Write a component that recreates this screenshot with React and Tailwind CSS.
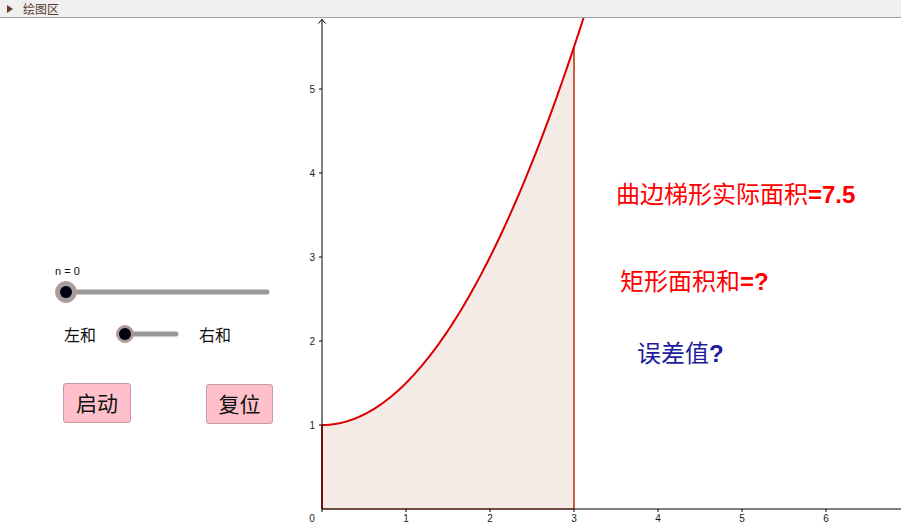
import React from "react";

const OX = 322;
const OY = 509;
const U = 84;
const f = (x) => 1 + (x * x) / 2;
const px = (x) => OX + x * U;
const py = (y) => OY - y * U;

function curvePoints(a, b, n) {
  const pts = [];
  for (let i = 0; i <= n; i++) {
    const x = a + ((b - a) * i) / n;
    pts.push(`${px(x).toFixed(2)},${py(f(x)).toFixed(2)}`);
  }
  return pts;
}

function Graph() {
  const fillPts = [`${OX},${OY}`, ...curvePoints(0, 3, 80), `${px(3)},${OY}`].join(" ");
  const curve = curvePoints(0, 3.13, 100).join(" ");
  const xt = [1, 2, 3, 4, 5, 6];
  const yt = [1, 2, 3, 4, 5];
  const ff = "'Liberation Sans', Arial, sans-serif";
  return (
    <svg className="absolute left-0 top-0" width="901" height="512" viewBox="0 18 901 512">
      <polygon points={fillPts} fill="#f4eae6" stroke="#c0401c" strokeWidth="1" />
      <line x1={OX} y1={OY} x2={OX} y2={py(1)} stroke="#d40000" strokeWidth="1.5" />
      <line x1={px(3)} y1={OY} x2={px(3)} y2={py(5.5)} stroke="#b83a18" strokeWidth="1.2" />
      <polyline points={curve} fill="none" stroke="#dd0000" strokeWidth="2" />
      <line x1={OX} y1="19" x2={OX} y2="512" stroke="#000" strokeWidth="1" />
      <polyline points={`${OX - 3.5},23.5 ${OX},19.5 ${OX + 3.5},23.5`} fill="none" stroke="#000" strokeWidth="1" />
      <line x1={OX} y1={OY} x2="901" y2={OY} stroke="#000" strokeWidth="1" />
      {xt.map((t) => (
        <g key={t}>
          <line x1={px(t)} y1={OY} x2={px(t)} y2={OY + 3} stroke="#000" strokeWidth="1" />
          <text x={px(t)} y={OY + 13} fontSize="10" textAnchor="middle" fill="#1a1a1a" fontFamily={ff}>
            {t}
          </text>
        </g>
      ))}
      <text x={OX - 10} y={OY + 13} fontSize="10" textAnchor="middle" fill="#1a1a1a" fontFamily={ff}>
        0
      </text>
      {yt.map((t) => (
        <g key={t}>
          <line x1={OX - 3} y1={py(t)} x2={OX} y2={py(t)} stroke="#000" strokeWidth="1" />
          <text x={OX - 7} y={py(t) + 3.5} fontSize="10" textAnchor="end" fill="#1a1a1a" fontFamily={ff}>
            {t}
          </text>
        </g>
      ))}
    </svg>
  );
}

function Slider({ width, r }) {
  const h = 2 * r + 3;
  const c = r + 1.5;
  return (
    <svg width={width} height={h} className="block shrink-0">
      <line x1={c} y1={c} x2={width - 3} y2={c} stroke="#999999" strokeWidth="5" strokeLinecap="round" />
      <circle cx={c} cy={c} r={r} fill="#a39d9b" stroke="#c49a90" strokeWidth="1" />
      <circle cx={c} cy={c} r="6" fill="#000010" />
    </svg>
  );
}

export default function App() {
  return (
    <div className="w-[901px] h-[530px] overflow-hidden bg-white font-['Noto_Sans_CJK_SC','Liberation_Sans',sans-serif]">
      <div className="h-[18px] flex items-center bg-[#f0f0f0] border-b border-[#a0a0a0] pl-[7px] gap-[10px]">
        <svg width="6" height="8" viewBox="0 0 6 8">
          <polygon points="0,0 6,4 0,8" fill="#6b3a2c" />
        </svg>
        <span className="text-[12px] leading-none text-[#5a3a2e]">绘图区</span>
      </div>
      <div className="relative w-[901px] h-[512px]">
        <Graph />
        <div className="relative flex">
          <div className="w-[322px] flex flex-col pt-[248px] text-[#111]">
            <div className="pl-[55px] text-[11px] leading-[11px] font-['Liberation_Sans',Arial,sans-serif]">
              n = 0
            </div>
            <div className="pl-[54px] mt-[3px]">
              <Slider width={216} r={10.5} />
            </div>
            <div className="flex items-center pl-[64px] mt-[20px] text-[16px] leading-none">
              <span>左和</span>
              <div className="ml-[19px]">
                <Slider width={64} r={8.5} />
              </div>
              <span className="ml-[20px]">右和</span>
            </div>
            <div className="flex items-start gap-[75px] pl-[63px] mt-[39px] text-[21px]">
              <div className="w-[68px] h-[40px] flex items-center justify-center bg-[#ffc0cb] border border-[#c79aa2] rounded-[3px]">
                启动
              </div>
              <div className="mt-[1px] w-[67px] h-[40px] flex items-center justify-center bg-[#ffc0cb] border border-[#c79aa2] rounded-[3px]">
                复位
              </div>
            </div>
          </div>
          <div className="flex flex-col items-start pl-[294px] pt-[163px] text-[24px] leading-none whitespace-nowrap">
            <div className="text-[#ff0000]">
              曲边梯形实际面积
              <span className="font-bold text-[24px] font-['Liberation_Sans',Arial,sans-serif]">=7.5</span>
            </div>
            <div className="text-[#ff0000] ml-[4px] mt-[61px]">
              矩形面积和
              <span className="font-bold text-[24px] font-['Liberation_Sans',Arial,sans-serif]">=?</span>
            </div>
            <div className="text-[#1c1c9c] ml-[21px] mt-[46px]">
              误差值
              <span className="font-bold text-[24px] font-['Liberation_Sans',Arial,sans-serif]">?</span>
            </div>
          </div>
        </div>
      </div>
    </div>
  );
}
